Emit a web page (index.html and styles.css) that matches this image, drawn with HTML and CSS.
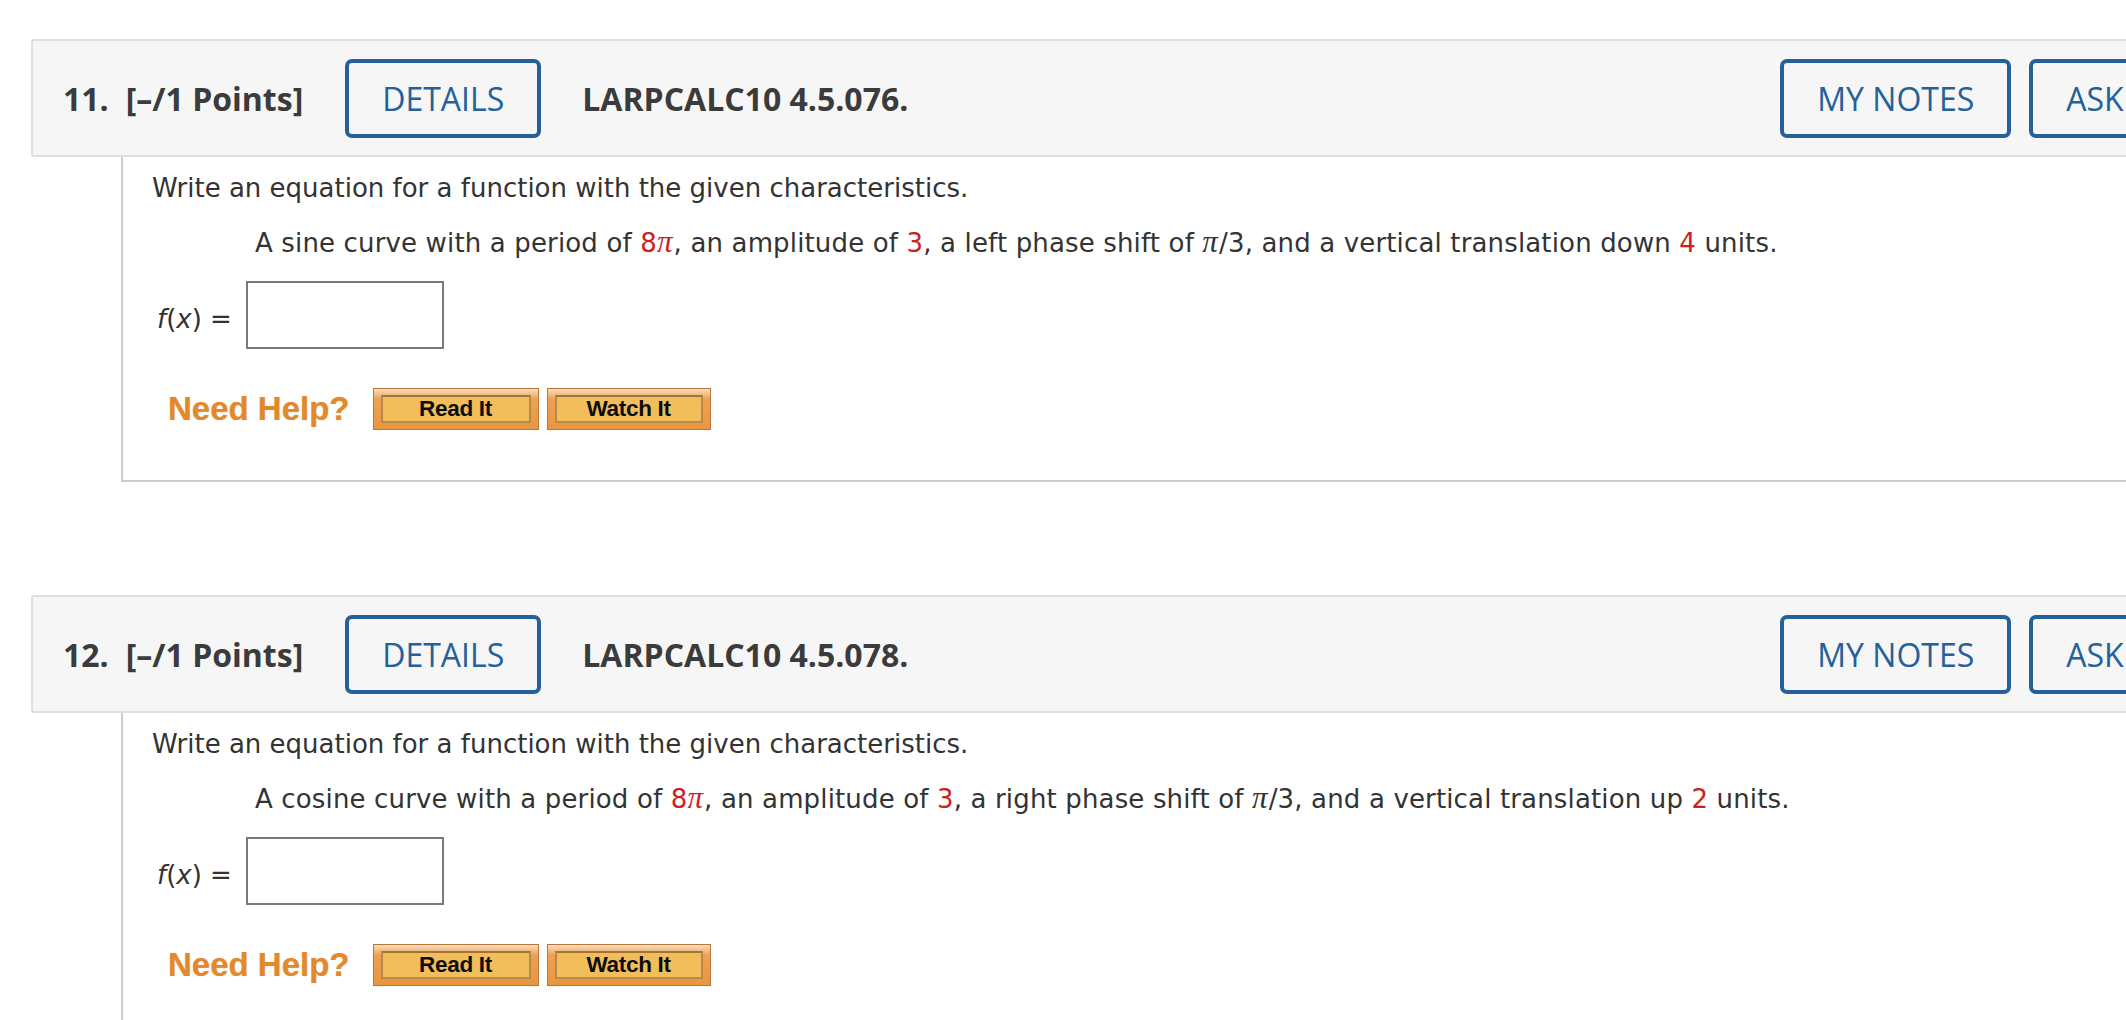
FILE: index.html
```html
<!DOCTYPE html>
<html lang="en">
<head>
<meta charset="utf-8">
<title>Questions</title>
<link rel="stylesheet" href="styles.css">
</head>
<body>
<div class="page">
  <section class="question">
    <div class="qhead">
      <span class="qnum">11.</span>
      <span class="pts">[–/1 Points]</span>
      <button class="btn">DETAILS</button>
      <span class="code">LARPCALC10 4.5.076.</span>
      <button class="btn">MY NOTES</button>
      <button class="btn btn-ask">ASK YOUR TEACHER</button>
    </div>
    <div class="qbody">
      <p class="prompt">Write an equation for a function with the given characteristics.</p>
      <p class="detail">A sine curve with a period of <span class="red">8<i class="pi">π</i></span>, an amplitude of <span class="red">3</span>, a left phase shift of <i class="pi">π</i>/3, and a vertical translation down <span class="red">4</span> units.</p>
      <div class="answer">
        <span class="label"><i>f</i>(<i>x</i>) =</span>
        <input class="box" type="text">
      </div>
      <div class="help">
        <span class="need">Need Help?</span>
        <span class="hbtn hbtn-read"><span class="hin">Read It</span></span>
        <span class="hbtn hbtn-watch"><span class="hin">Watch It</span></span>
      </div>
    </div>
  </section>

  <section class="question">
    <div class="qhead">
      <span class="qnum">12.</span>
      <span class="pts">[–/1 Points]</span>
      <button class="btn">DETAILS</button>
      <span class="code">LARPCALC10 4.5.078.</span>
      <button class="btn">MY NOTES</button>
      <button class="btn btn-ask">ASK YOUR TEACHER</button>
    </div>
    <div class="qbody">
      <p class="prompt">Write an equation for a function with the given characteristics.</p>
      <p class="detail">A cosine curve with a period of <span class="red">8<i class="pi">π</i></span>, an amplitude of <span class="red">3</span>, a right phase shift of <i class="pi">π</i>/3, and a vertical translation up <span class="red">2</span> units.</p>
      <div class="answer">
        <span class="label"><i>f</i>(<i>x</i>) =</span>
        <input class="box" type="text">
      </div>
      <div class="help">
        <span class="need">Need Help?</span>
        <span class="hbtn hbtn-read"><span class="hin">Read It</span></span>
        <span class="hbtn hbtn-watch"><span class="hin">Watch It</span></span>
      </div>
    </div>
  </section>
</div>
</body>
</html>
```
FILE: styles.css
```css
html, body {
  margin: 0;
  padding: 0;
  background: #ffffff;
  overflow: hidden;
}

.page {
  padding-top: 39px;
  padding-left: 31px;
  width: 2402px;
}

.question {
  margin-bottom: 113px;
}

.qhead {
  display: flex;
  align-items: center;
  height: 114px;
  background: #f6f6f6;
  border: 2px solid #dedede;
  border-radius: 3px;
  padding-left: 30px;
  font-family: "Open Sans", "DejaVu Sans", sans-serif;
  color: #3b3b3b;
  font-size: 32px;
}

.qnum {
  font-weight: 700;
  margin-right: 17px;
}

.pts {
  font-weight: 700;
  margin-right: 42px;
}

.code {
  font-weight: 700;
  margin-left: 41px;
  margin-right: auto;
}

.btn {
  font-family: "Open Sans", "DejaVu Sans", sans-serif;
  font-size: 32px;
  font-weight: 400;
  color: #24619a;
  background: transparent;
  border: 4px solid #24619a;
  border-radius: 7px;
  height: 79px;
  padding: 0 33px;
  margin: 0;
  white-space: nowrap;
}

.btn-ask {
  margin-left: 18px;
  margin-right: 31px;
}

.qbody {
  margin-left: 90px;
  border-left: 2px solid #cccccc;
  border-bottom: 2px solid #cccccc;
  padding: 15px 0 50px 29px;
  font-family: "DejaVu Sans", Verdana, sans-serif;
  font-size: 26px;
  line-height: 32px;
  color: #333333;
}

.qbody p {
  margin: 0;
}

.prompt {
  margin-bottom: 22px !important;
}

.detail {
  padding-left: 103px;
  margin-bottom: 22px !important;
  letter-spacing: 0.15px;
}

.red {
  color: #cc1f1f;
}

.pi {
  font-family: "Liberation Serif", "DejaVu Serif", serif;
  font-style: italic;
  font-size: 31px;
  padding-right: 1px;
}

.answer {
  display: flex;
  align-items: center;
  gap: 14px;
}

.label {
  padding-left: 5px;
  padding-top: 8px;
}

.box {
  width: 194px;
  height: 64px;
  border: 2px solid #7a7a7a;
  margin: 0;
  padding: 0;
  background: #fff;
}

.help {
  display: flex;
  align-items: center;
  margin-top: 39px;
}

.need {
  font-family: "Liberation Sans", Arial, sans-serif;
  font-weight: 700;
  font-size: 33px;
  color: #e2892e;
  text-shadow: 0 0 1px rgba(226, 137, 46, 0.6);
  padding-left: 16px;
  margin-right: 23px;
}

.hbtn {
  display: block;
  box-sizing: border-box;
  height: 42px;
  padding: 6px 7px;
  border: 1px solid #b8743a;
  background: linear-gradient(#f9dfc0 0%, #eda253 25%, #e9963f 100%);
  margin-right: 8px;
}

.hbtn .hin {
  display: flex;
  align-items: center;
  justify-content: center;
  box-sizing: border-box;
  height: 28px;
  border: 2px solid #b9884a;
  border-top-color: #a27236;
  background: #f2bd5b;
  font-family: "Liberation Sans", Arial, sans-serif;
  font-weight: 700;
  font-size: 22.5px;
  color: #0d0d0d;
  letter-spacing: -0.3px;
}

.hbtn-read .hin {
  width: 150px;
}

.hbtn-watch .hin {
  width: 148px;
}
```
